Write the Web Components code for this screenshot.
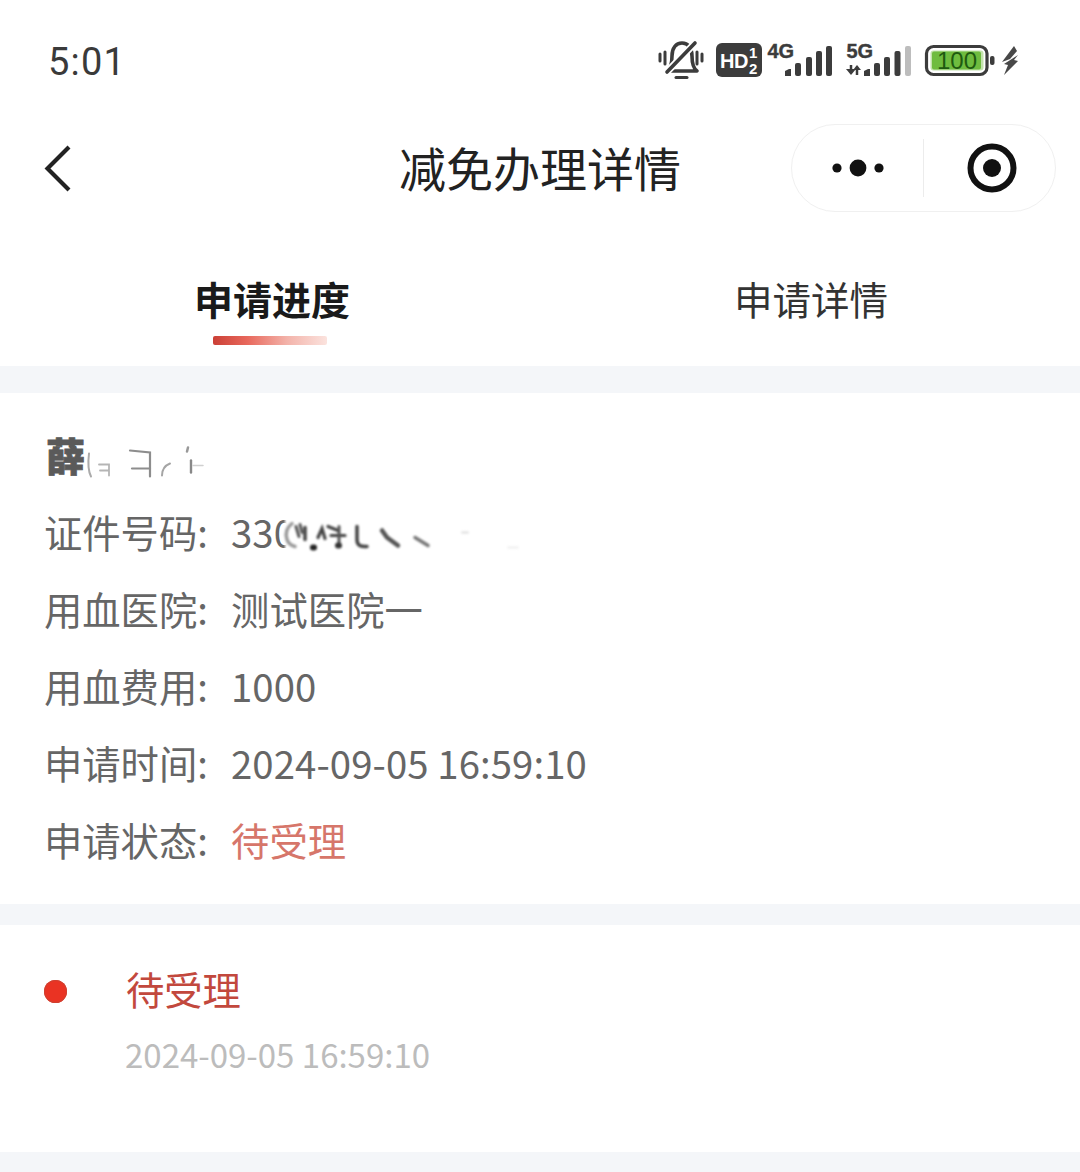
<!DOCTYPE html>
<html lang="zh"><head><meta charset="utf-8"><title>减免办理详情</title>
<style>
html,body{margin:0;padding:0;background:#fff}
body{width:1080px;height:1172px;overflow:hidden;font-family:"Noto Sans CJK SC","Noto Sans",sans-serif;color:#666}
</style></head>
<body>
<status-bar></status-bar>
<nav-bar title="减免办理详情"></nav-bar>
<tab-bar></tab-bar>
<band-gap h="27"></band-gap>
<info-card>
  <name-row></name-row>
  <info-row label="证件号码:"><id-mask></id-mask></info-row>
  <info-row label="用血医院:">测试医院一</info-row>
  <info-row label="用血费用:">1000</info-row>
  <info-row label="申请时间:">2024-09-05 16:59:10</info-row>
  <info-row label="申请状态:" tone="status">待受理</info-row>
</info-card>
<band-gap h="21"></band-gap>
<time-line state="待受理" time="2024-09-05 16:59:10"></time-line>
<band-gap h="20"></band-gap>
<script>
function def(name, html){
  customElements.define(name, class extends HTMLElement{
    connectedCallback(){
      if(this.shadowRoot) return;
      const r=this.attachShadow({mode:'open'});
      r.innerHTML=typeof html==='function'?html(this):html;
    }
  });
}
def('status-bar',`<style>
:host{display:flex;height:120px;box-sizing:border-box;padding:0 60px 0 48px;align-items:center;justify-content:space-between}
.t{font:400 38px/1 Roboto,"Open Sans",sans-serif;color:#3a3a3a;letter-spacing:1.200px;margin-top:4px}
svg{display:block;margin-top:0}
text{font-family:"Liberation Sans",Roboto,sans-serif}
</style>
<span class="t">5:01</span>
<svg width="362" height="44" viewBox="658 39 362 44" fill="none">
  <g stroke-linecap="round" stroke-linejoin="round">
    <path d="M667 72c4-3 5-8 5-15 0-8 4-13 10-13s10 5 10 13c0 7 1 12 5 15z" stroke="#3c3c3c" stroke-width="3.600"/>
    <path d="M664 76l33-34" stroke="#fff" stroke-width="7"/>
    <path d="M667 73l28-29" stroke="#3c3c3c" stroke-width="3.600"/>
    <path d="M660 55v7M665 53v12M697 53v12M702 55v7" stroke="#3c3c3c" stroke-width="3"/>
    <path d="M676 78.500h11" stroke="#3c3c3c" stroke-width="3"/>
  </g>
  <rect x="716" y="44" width="46" height="34" rx="6" fill="#3c3c3c"/>
  <text x="720" y="68.500" font-size="20" font-weight="700" fill="#fff" letter-spacing="-.5">HD</text>
  <text x="749" y="58.500" font-size="15" font-weight="700" fill="#fff">1</text>
  <text x="749" y="75" font-size="15" font-weight="700" fill="#fff">2</text>
  <text x="767.500" y="58.500" font-size="20" font-weight="700" fill="#3c3c3c" stroke="#3c3c3c" stroke-width=".4">4G</text>
  <g fill="#3c3c3c">
    <path d="M785 72l4-2h2v7h-6z"/><rect x="795" y="64" width="6" height="13" rx="2"/>
    <rect x="806" y="58" width="6" height="19" rx="2"/><rect x="816" y="52" width="6" height="25" rx="2"/>
    <rect x="826" y="47" width="6" height="30" rx="2"/>
  </g>
  <text x="846.500" y="59" font-size="20" font-weight="700" fill="#3c3c3c" stroke="#3c3c3c" stroke-width=".4">5G</text>
  <path d="M851 66v5" stroke="#3c3c3c" stroke-width="2.500"/><path d="M846 70h10l-5 6z" fill="#3c3c3c"/>
  <path d="M857 76v-5" stroke="#3c3c3c" stroke-width="2.500"/><path d="M853 71l4-5 4 5z" fill="#3c3c3c"/>
  <g fill="#3c3c3c">
    <path d="M864 72l4-2h2v7h-6z"/><rect x="874" y="64" width="6" height="13" rx="2"/>
    <rect x="884" y="58" width="6" height="19" rx="2"/><rect x="894.500" y="52" width="6" height="25" rx="2"/>
  </g>
  <rect x="905" y="47" width="6" height="30" rx="2" fill="#bdbdbd"/>
  <rect x="926.500" y="47.500" width="60.500" height="28" rx="7" stroke="#3c3c3c" stroke-width="3.200"/>
  <rect x="930.500" y="51.500" width="53" height="20" rx="3" fill="#c3e2ad"/>
  <rect x="932" y="52.500" width="49" height="18" rx="2" fill="#6fbc3f"/>
  <text x="957" y="69.500" font-size="24" text-anchor="middle" fill="#1f5a10">100</text>
  <rect x="990" y="57" width="4.500" height="9" rx="2" fill="#3c3c3c"/>
  <path d="M1014 47L1002 63l8-3 7-8zM1018 56l-14 9 4 1-4 10 14-14-4-1z" fill="#484848"/>
</svg>`);
def('nav-bar',el=>`<style>
:host{display:block;position:relative;height:96px}
.row{display:grid;grid-template-columns:1fr auto 1fr;align-items:center;height:96px;padding:0 24px 0 44px}
.title{font-size:47px;line-height:1;color:#222;font-weight:400;white-space:nowrap;transform:translate(-10px,-2px)}
.back{display:block}
.cap{justify-self:end;box-sizing:border-box;width:265px;height:88px;border:1.500px solid #f0f0f0;border-radius:44px;display:flex;align-items:center}
.a{width:131px;box-sizing:border-box;padding-left:2px;display:flex;justify-content:center}
.d{width:1px;height:58px;background:#ececec}
.b{flex:1;box-sizing:border-box;padding-left:4px;display:flex;justify-content:center}
</style>
<div class="row">
 <svg class="back" width="30" height="48" viewBox="0 0 30 48" fill="none"><path d="M25 3L3.500 24.500 25 46" stroke="#222" stroke-width="4.200"/></svg>
 <div class="title">${el.getAttribute('title')}</div>
 <div class="cap">
  <div class="a"><svg width="54" height="18" viewBox="0 0 54 18"><circle cx="5" cy="9" r="4.600" fill="#111"/><circle cx="26" cy="9" r="8.400" fill="#111"/><circle cx="47" cy="9" r="4.600" fill="#111"/></svg></div>
  <div class="d"></div>
  <div class="b"><svg width="50" height="50" viewBox="0 0 50 50"><circle cx="25" cy="25" r="21.500" fill="none" stroke="#111" stroke-width="6"/><circle cx="25" cy="25" r="9" fill="#111"/></svg></div>
 </div>
</div>`);
def('tab-bar',`<style>
:host{display:grid;grid-template-columns:1fr 1fr;height:150px;box-sizing:border-box}
.t{display:flex;flex-direction:column;align-items:center;padding-top:60px;line-height:44px;color:#333;font-size:38.500px}
.on{color:#1a1a1a;font-weight:700;font-size:39px;transform:translateX(2px)}
.r{transform:translateX(1px)}
i{display:block;width:114px;height:9px;margin-top:16px;border-radius:2px;transform:translateX(-2px);background:linear-gradient(90deg,#cb4036,#e8685c 30%,#f3b3aa 65%,#fbe3de);}
</style>
<div class="t on">申请进度<i></i></div><div class="t r">申请详情</div>`);
def('band-gap',el=>`<style>:host{display:block;height:${el.getAttribute('h')}px;background:#f4f6f9}</style>`);
def('info-card',`<style>:host{display:block;height:511px;box-sizing:border-box;padding:26px 0 0 44px;background:#fff}</style><slot></slot>`);
def('name-row',`<style>
:host{display:flex;align-items:center;height:75px;box-sizing:border-box}
b{display:block;width:41px;padding-left:2px;box-sizing:border-box;font-size:39px;line-height:1;font-weight:900;color:#5a5a5a;-webkit-text-stroke:.8px #5a5a5a;margin-top:-4px;white-space:nowrap}
svg{display:block;filter:blur(.5px)}
</style><b>薛</b><svg width="130" height="50" viewBox="85 431.500 130 50" fill="none" stroke-linecap="round">
<path d="M89 453c-1 8-1 17 2 23" stroke="#aaa" stroke-width="2"/>
<path d="M99 464h10v11M100 470h8" stroke="#b5b5b5" stroke-width="1.800"/>
<path d="M130 450l20 2v24" stroke="#8d8d8d" stroke-width="2.200"/>
<path d="M132 468h18" stroke="#8d8d8d" stroke-width="2.200"/>
<path d="M162 475c0-7 3-10 8-12" stroke="#a5a5a5" stroke-width="2"/>
<path d="M188 447l-1 4" stroke="#999" stroke-width="2.500"/>
<path d="M191 460v12" stroke="#888" stroke-width="2.400"/>
<path d="M193 465h10" stroke="#d0d0d0" stroke-width="1.500"/>
</svg>`);
def('info-row',el=>`<style>
:host{display:flex;height:77px;align-items:center;font-size:38.300px;line-height:1;color:#666;white-space:nowrap}
.l{width:187px;flex:none}
.v{color:${el.getAttribute('tone')==='status'?'#d6766a':'#666'};letter-spacing:.1px}
</style><span class="l">${el.getAttribute('label')}</span><span class="v"><slot></slot></span>`);
def('id-mask',`<style>
:host{display:inline-flex;align-items:center}
svg{display:block;margin-left:-21px;filter:blur(.9px)}
</style><span>330</span><svg width="260" height="60" viewBox="274 502.500 260 60" fill="none" stroke-linecap="round">
<rect x="285" y="514" width="16" height="36" fill="#fff"/>
<path d="M292 523c-5 4-7 10-5 16 1 3 4 6 8 7" stroke="#999" stroke-width="3.500"/>
<path d="M296 526l3 10M300 524l2 8" stroke="#555" stroke-width="3"/>
<path d="M305 527v12" stroke="#444" stroke-width="3.500"/>
<path d="M313 547h1" stroke="#222" stroke-width="6"/>
<path d="M318 537l4-9 3 10" stroke="#444" stroke-width="3.200"/>
<path d="M328 526l10 4M331 535h14" stroke="#444" stroke-width="3.200"/>
<path d="M339 526v18" stroke="#555" stroke-width="3"/>
<path d="M338 545h1" stroke="#333" stroke-width="6"/>
<path d="M357 526v13c0 6 3 7 10 7" stroke="#444" stroke-width="3.500"/>
<path d="M382 530l5 7 11 8" stroke="#555" stroke-width="4.500"/>
<path d="M415 537l13 8" stroke="#777" stroke-width="3.500"/>
<path d="M462 532h6" stroke="#ddd" stroke-width="2"/>
<path d="M508 547h10" stroke="#eee" stroke-width="2"/>
</svg>`);
def('time-line',el=>`<style>
:host{display:grid;grid-template-columns:126px 1fr;height:227px;box-sizing:border-box;padding-top:39px;background:#fff}
.dot{width:23px;height:23px;border-radius:50%;background:#ea3323;box-shadow:inset 0 0 0 1px #d04030;margin:16px 0 0 44px}
.s{font-size:38.300px;line-height:50px;color:#c2483d}
.d{font-size:33px;line-height:40px;color:#bcbcbc;margin:20px 0 0 -1px}
</style><div><div class="dot"></div></div><div><div class="s">${el.getAttribute('state')}</div><div class="d">${el.getAttribute('time')}</div></div>`);
</script>
</body></html>
